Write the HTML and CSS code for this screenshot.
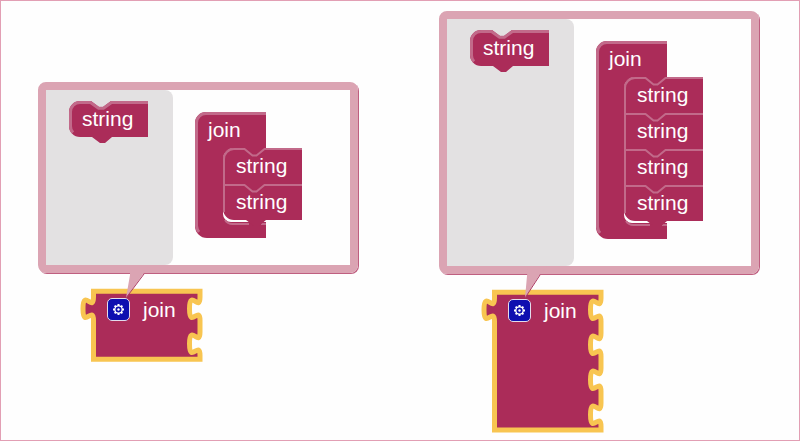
FILE: index.html
```html
<!DOCTYPE html>
<html lang="en">
<head>
<meta charset="utf-8">
<title>Join block mutator</title>
<link rel="stylesheet" href="styles.css">
</head>
<body>
<svg class="defs" aria-hidden="true">
  <defs>
    <g id="string-single">
      <path class="fill" d="M11 0H22L30 6H34L42 0H79V36H43L36 42H31L23 36H11A11 11 0 0 1 0 25V11A11 11 0 0 1 11 0Z"/>
      <path class="shine" d="M4 31.500A9 9 0 0 1 1.500 25V11A9.500 9.500 0 0 1 11 1.500H21.500L29.500 7.200H34.500L42.500 1.500H79"/>
    </g>
    <g id="string-first">
      <path class="fill" d="M11 0H79V36H43L36 42H31L23 36H0V11A11 11 0 0 1 11 0Z"/>
      <path class="shine thin" d="M1 36V11A10 10 0 0 1 11 1H21.500L29.500 7.500H33.500L41.500 1H79"/>
    </g>
    <g id="string-middle">
      <path class="fill" d="M0 0H79V36H43L36 42H31L23 36H0Z"/>
      <path class="shine thin" d="M1 36V0M2 1H21.500L29.500 7.500H33.500L41.500 1H79"/>
    </g>
    <g id="string-last">
      <path class="fill" d="M0 0H79V36H43L36 42H31L23 36H11A11 11 0 0 1 0 25Z"/>
      <path class="shine thin" d="M1 28V0M2 1H21.500L29.500 7.500H33.500L41.500 1H79"/>
    </g>
    <g id="gear">
      <g fill="#fff">
        <rect id="tooth" x="10.500" y="6" width="2" height="2"/>
        <use href="#tooth" transform="rotate(45 11.500 11.500)"/>
        <use href="#tooth" transform="rotate(90 11.500 11.500)"/>
        <use href="#tooth" transform="rotate(135 11.500 11.500)"/>
        <use href="#tooth" transform="rotate(180 11.500 11.500)"/>
        <use href="#tooth" transform="rotate(225 11.500 11.500)"/>
        <use href="#tooth" transform="rotate(270 11.500 11.500)"/>
        <use href="#tooth" transform="rotate(315 11.500 11.500)"/>
        <circle cx="11.500" cy="11.500" r="1.200"/>
      </g>
      <circle cx="11.500" cy="11.500" r="3.700" fill="none" stroke="#fff" stroke-width="1.300"/>
    </g>
  </defs>
</svg>

<main class="workspace">
  <section class="group">
    <div class="bubble bubble-short">
      <div class="flyout"></div>
      <div class="block palette-block">
        <div class="string"><svg class="shape" aria-hidden="true"><use href="#string-single"/></svg><span class="label">string</span></div>
      </div>
      <div class="block container-block">
        <svg class="shape" aria-hidden="true">
          <path class="fill" d="M11 0H71V36H39A11 11 0 0 0 28 47V102A8 8 0 0 0 36 110H71V126H12A12 12 0 0 1 0 114V11A11 11 0 0 1 11 0Z"/>
          <path class="shine" d="M4 120A11 11 0 0 1 1.500 114V11A9.500 9.500 0 0 1 11 1.500H71"/>
          <path class="shine thin" d="M30 108A9 9 0 0 0 38 112H54M66 112H71"/>
        </svg>
        <div class="label">join</div>
        <div class="stack">
          <div class="string"><svg class="shape" aria-hidden="true"><use href="#string-first"/></svg><span class="label">string</span></div>
          <div class="string"><svg class="shape" aria-hidden="true"><use href="#string-last"/></svg><span class="label">string</span></div>
        </div>
      </div>
      <svg class="pointer" aria-hidden="true"><path class="tail" d="M6 0H28L20 8L2 33L6 10Z"/><path class="tail-edge" d="M20 9L2 33"/></svg>
    </div>
    <div class="join-block join-two">
      <svg class="shape" aria-hidden="true">
        <path class="selected" d="M13.500 2.200H120V8c0 16-10.500-9-10.500 11.800s10.500-4.200 10.500 11.800V43c0 16-10.500-9-10.500 11.800s10.500-4.200 10.500 11.800V70.200H13.500V31.600c0-16-10.500 9-10.500-11.800s10.500 4.200 10.500-11.800Z"/>
      </svg>
      <button class="mutator" type="button" aria-label="Edit inputs"><svg viewBox="0 0 23 23" aria-hidden="true"><use href="#gear"/></svg></button>
      <span class="label">join</span>
    </div>
  </section>

  <section class="group">
    <div class="bubble bubble-tall">
      <div class="flyout"></div>
      <div class="block palette-block">
        <div class="string"><svg class="shape" aria-hidden="true"><use href="#string-single"/></svg><span class="label">string</span></div>
      </div>
      <div class="block container-block">
        <svg class="shape" aria-hidden="true">
          <path class="fill" d="M11 0H71V36H39A11 11 0 0 0 28 47V174A8 8 0 0 0 36 182H71V198H12A12 12 0 0 1 0 186V11A11 11 0 0 1 11 0Z"/>
          <path class="shine" d="M4 192A11 11 0 0 1 1.500 186V11A9.500 9.500 0 0 1 11 1.500H71"/>
          <path class="shine thin" d="M30 180A9 9 0 0 0 38 184H54M66 184H71"/>
        </svg>
        <div class="label">join</div>
        <div class="stack">
          <div class="string"><svg class="shape" aria-hidden="true"><use href="#string-first"/></svg><span class="label">string</span></div>
          <div class="string"><svg class="shape" aria-hidden="true"><use href="#string-middle"/></svg><span class="label">string</span></div>
          <div class="string"><svg class="shape" aria-hidden="true"><use href="#string-middle"/></svg><span class="label">string</span></div>
          <div class="string"><svg class="shape" aria-hidden="true"><use href="#string-last"/></svg><span class="label">string</span></div>
        </div>
      </div>
      <svg class="pointer" aria-hidden="true"><path class="tail" d="M3 0H22L15 8L0 32L2 10Z"/><path class="tail-edge" d="M15 9L0 32"/></svg>
    </div>
    <div class="join-block join-four">
      <svg class="shape" aria-hidden="true">
        <path class="selected" d="M13.500 2.200H120V8c0 16-10.500-9-10.500 11.800s10.500-4.200 10.500 11.800V43c0 16-10.500-9-10.500 11.800s10.500-4.200 10.500 11.800V78c0 16-10.500-9-10.500 11.800s10.500-4.200 10.500 11.800V113c0 16-10.500-9-10.500 11.800s10.500-4.200 10.500 11.800V140H13.500V31.600c0-16-10.500 9-10.500-11.800s10.500 4.200 10.500-11.800Z"/>
      </svg>
      <button class="mutator" type="button" aria-label="Edit inputs"><svg viewBox="0 0 23 23" aria-hidden="true"><use href="#gear"/></svg></button>
      <span class="label">join</span>
    </div>
  </section>
</main>
</body>
</html>
```
FILE: styles.css
```css
* {
  box-sizing: border-box;
}

body {
  margin: 0;
  background: #fefefe;
  color: #fff;
  font: 21px/36px "Liberation Sans", Arial, sans-serif;
}

.defs {
  position: absolute;
  width: 0;
  height: 0;
}

.workspace {
  display: flex;
  justify-content: space-between;
  align-items: center;
  min-height: 100vh;
  padding: 2px 39px 0 37px;
  border: 1px solid #e29fb4;
}

.group {
  width: 321px;
}

.bubble {
  position: relative;
  display: flex;
  margin: 0 1px 16px 0;
  border: 8px solid #dba4b3;
  border-radius: 8px;
  box-shadow: 1px 1px 0 #bf5f80;
}

.bubble-short {
  height: 191px;
}

.bubble-tall {
  height: 263px;
}

.flyout {
  width: 127px;
  background: #e3e1e2;
  border-radius: 0 8px 8px 0;
}

/* Blocks sit freely on the mutator canvas. */
.block {
  position: absolute;
}

.palette-block {
  left: 23px;
  top: 11px;
}

.container-block {
  left: 149px;
  top: 22px;
}

.shape {
  position: absolute;
  left: 0;
  top: 0;
  width: 100%;
  height: 100%;
  overflow: visible;
}

.fill {
  fill: #ab2c59;
}

.shine {
  fill: none;
  stroke: #c26a8a;
  stroke-width: 3;
}

.thin {
  stroke-width: 2;
}

.label {
  position: relative;
  display: block;
}

.string {
  position: relative;
  width: 79px;
  height: 36px;
  padding-left: 13px;
}

.container-block > .label {
  padding-left: 13px;
}

.stack {
  margin-left: 28px;
  padding-bottom: 18px;
}

.pointer {
  position: absolute;
  left: 78px;
  top: 100%;
  width: 30px;
  height: 36px;
  overflow: visible;
  z-index: 1;
}

.tail {
  fill: #dba4b3;
}

.tail-edge {
  fill: none;
  stroke: #ad3c64;
}

.join-block {
  position: relative;
  display: flex;
  align-items: flex-start;
  gap: 13px;
  width: 122px;
  margin-left: 42px;
  padding: 9px 0 0 27px;
}

.join-two {
  height: 72px;
}

.join-four {
  height: 142px;
}

.join-block .label {
  line-height: 23px;
}

.selected {
  fill: #ab2c59;
  stroke: #f8c551;
  stroke-width: 5px;
}

.mutator {
  position: relative;
  width: 23px;
  height: 23px;
  padding: 0;
  border: 1px solid #e3dcec;
  border-radius: 5px;
  background: #0f0fb0;
}

.mutator svg {
  display: block;
  width: 23px;
  height: 23px;
  margin: -1px;
}
```
